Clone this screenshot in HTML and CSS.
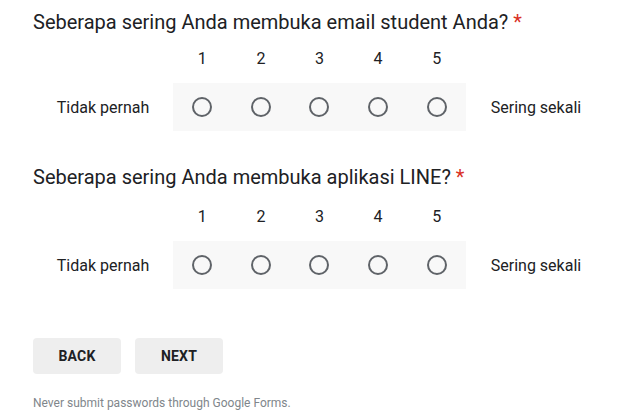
FILE: index.html
```html
<!DOCTYPE html>
<html>
<head>
<meta charset="utf-8">
<link rel="stylesheet" href="styles.css">
</head>
<body>
<div class="form">
  <div class="question">
    <div class="title">Seberapa sering Anda membuka email student Anda? <span class="req">*</span></div>
    <div class="scale">
      <div class="head"></div>
      <div class="num">1</div><div class="num">2</div><div class="num">3</div><div class="num">4</div><div class="num">5</div>
      <div class="head"></div>
      <div class="label">Tidak pernah</div>
      <div class="cell"><span class="radio"></span></div>
      <div class="cell"><span class="radio"></span></div>
      <div class="cell"><span class="radio"></span></div>
      <div class="cell"><span class="radio"></span></div>
      <div class="cell"><span class="radio"></span></div>
      <div class="label">Sering sekali</div>
    </div>
  </div>
  <div class="question second">
    <div class="title">Seberapa sering Anda membuka aplikasi LINE? <span class="req">*</span></div>
    <div class="scale">
      <div class="head"></div>
      <div class="num">1</div><div class="num">2</div><div class="num">3</div><div class="num">4</div><div class="num">5</div>
      <div class="head"></div>
      <div class="label">Tidak pernah</div>
      <div class="cell"><span class="radio"></span></div>
      <div class="cell"><span class="radio"></span></div>
      <div class="cell"><span class="radio"></span></div>
      <div class="cell"><span class="radio"></span></div>
      <div class="cell"><span class="radio"></span></div>
      <div class="label">Sering sekali</div>
    </div>
  </div>
  <div class="buttons">
    <button class="btn">BACK</button>
    <button class="btn">NEXT</button>
  </div>
  <div class="footer">Never submit passwords through Google Forms.</div>
</div>
</body>
</html>
```
FILE: styles.css
```css
* { box-sizing: border-box; }
html, body { margin: 0; padding: 0; background: #fff; }
body { font-family: Roboto, "Noto Sans", Arial, sans-serif; color: #202124; }
.form { width: 638px; padding: 10px 32px 0 33px; }
.question { margin-bottom: 34px; }
.question.second { margin-bottom: 49px; }
.title { font-size: 20px; line-height: 24px; color: #202124; }
.req { color: #d93025; }
.scale {
  display: grid;
  grid-template-columns: 140px repeat(5, 58.6px) 1fr;
  margin-top: 13px;
}
.second .scale { margin-top: 16px; }
.num { text-align: center; font-size: 16px; line-height: 24px; height: 36px; }
.label { display: flex; align-items: center; justify-content: center; font-size: 16px; height: 48px; }
.cell { background: #f8f8f8; height: 48px; display: flex; align-items: center; justify-content: center; }
.radio { width: 20px; height: 20px; border: 2px solid #5f6368; border-radius: 50%; }
.buttons { display: flex; gap: 14px; }
.btn {
  width: 88px; height: 36px; border: none; border-radius: 4px;
  background: #eeeeee; font-family: Roboto, sans-serif; font-weight: 700;
  font-size: 14px; color: #202124; letter-spacing: 0.2px; padding: 0;
}
.footer { margin-top: 21px; font-size: 12px; line-height: 16px; color: #80868b; }
```
